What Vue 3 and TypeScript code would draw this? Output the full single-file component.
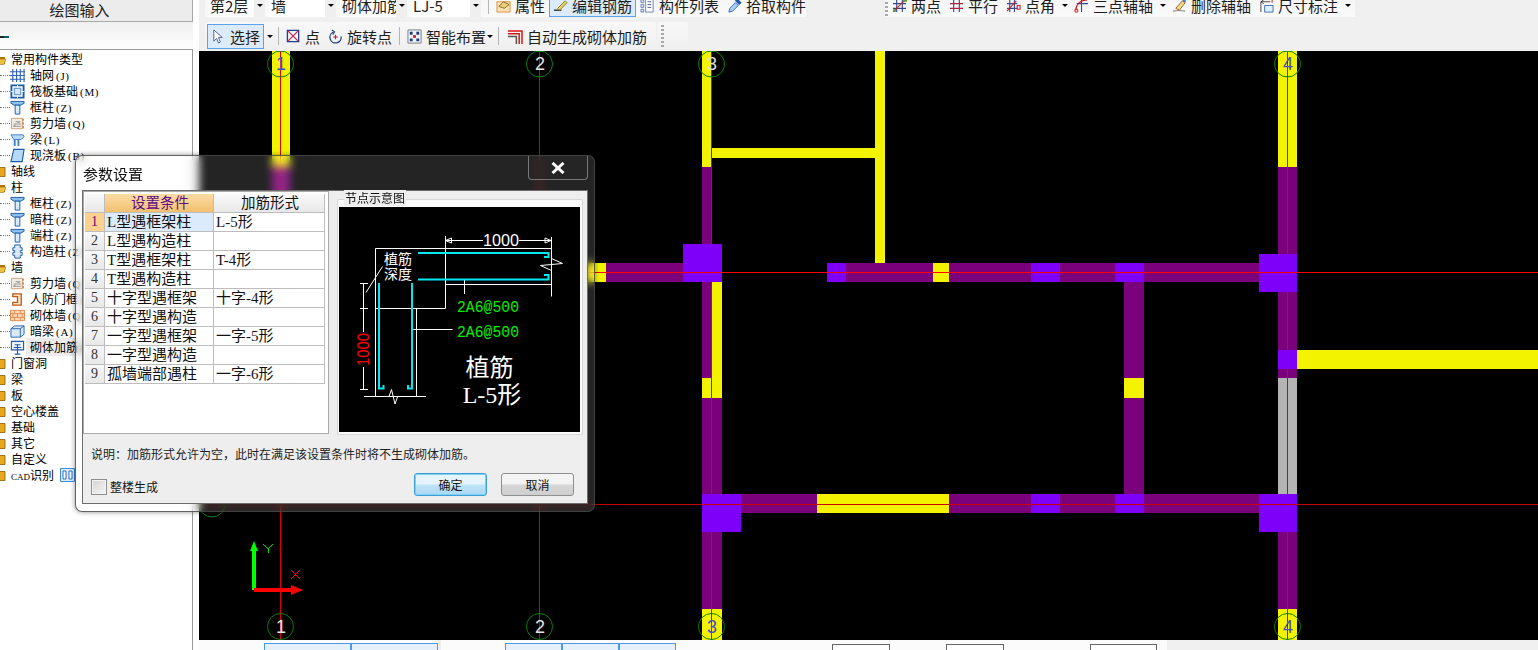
<script setup lang="ts">
interface Shape {
  d: string
  s?: string
  f?: string
  w?: number
}

interface Tool {
  icon?: string
  label: string
  active?: boolean
  arrow?: boolean
  tight?: boolean
  sep?: boolean
  iconWidth?: number
}

interface TreeRow {
  label: string
  key?: string
  icon?: string
  open?: boolean
  prefix?: string
}

const icons: Record<string, Shape[]> = {
  grid: [
    { d: 'M3 1v14M7 1v14M11 1v14M15 1v14M0 4h16M0 8h16M0 12h16', s: '#2f62b8', w: 1.2 },
  ],
  raft: [
    { d: 'M1.5 1.5h13v13h-13z', s: '#1d5aa8', f: '#fff', w: 2 },
    { d: 'M4.5 4.5h7v7h-7z', s: '#3f7fc8', f: '#d8e8f8', w: 1 },
    { d: 'M1 8h3M12 8h3M8 1v3M8 12v3', s: '#fff', w: 1 },
  ],
  col: [
    { d: 'M1 1.5h14v2l-3.5 2v0h-7l-3.5-2z', s: '#1a5aa8', f: '#8fc0ee', w: 1 },
    { d: 'M5.5 5.5h5v9.5h-5z', s: '#1a5aa8', f: '#d8eafb', w: 1 },
  ],
  wall: [
    { d: 'M1.5 2.5h12v11h-12z', s: '#c9a27a', f: '#f0ece6', w: 1 },
    { d: 'M3 11h9M4 8.5h8M6 6h5M4 10h2M8 7h2', s: '#999', w: 1 },
    { d: 'M14 3v2M14 7v2M14 11v2', s: '#e0701a', w: 1.5 },
  ],
  beam: [
    { d: 'M1 3h13l1 2-3 3H4z', s: '#3f7fc8', f: '#b8daf6', w: 1 },
    { d: 'M5 8v7M9 8v7', s: '#3f7fc8', w: 2 },
  ],
  slab: [
    { d: 'M4 1.5h11l-2 13H1z', s: '#1d5aa8', f: '#b8d8f6', w: 1.2 },
  ],
  connect: [
    { d: 'M5 1h6v3h2v3h-2v2h2v3h-2v3H5v-3H3V9h2V7H3V4h2z', s: '#1d5aa8', f: '#dbe8f8', w: 1 },
  ],
  door: [
    { d: 'M3 2h9v12H3v-3h5V5H3z', s: '#c05a16', f: '#fbe2c8', w: 1.4 },
  ],
  brick: [
    { d: 'M.5 2.5h15v11H.5z', s: '#e08a4a', f: '#fbd9b8', w: 1 },
    { d: 'M.5 6h15M.5 10h15M5 2.5V6M11 2.5V6M3 6v4M8 6v4M13 6v4M5 10v3.5M11 10v3.5', s: '#e08a4a', w: 1 },
  ],
  lintel: [
    { d: 'M1 5l4-3h10v9l-4 3H1z', s: '#2a64ad', f: '#d9e8f7', w: 1 },
    { d: 'M1 5h10v9M11 5l4-3', s: '#2a64ad', w: 1 },
  ],
  rebar: [
    { d: 'M1.5 1.5h13v9h-13z', s: '#2458a8', f: '#eaf3fc', w: 1.2 },
    { d: 'M5 5h6M8 5v10M5 15h6M4 8l8 0', s: '#2458a8', w: 1.2 },
  ],
  cad: [
    { d: 'M.5 .5h14v13h-14z', s: '#3d8ae0', f: '#dcecfc', w: 1 },
    { d: 'M3 3h3v8H3zM9 3h3v8H9z', s: '#2a6fc8', f: '#fff', w: 1 },
  ],
  attr: [
    { d: 'M1 4h14v11H1z', s: '#e0903a', f: '#fde2b8', w: 1 },
    { d: 'M3 9l5-5 6 3-5 4z', s: '#8a6a20', f: '#e8d078', w: 1 },
  ],
  edit: [
    { d: 'M1 13h8', s: '#333', w: 1.5 },
    { d: 'M5 11L13 3l2 2-8 8z', s: '#8a7a20', f: '#e8d46a', w: 1 },
  ],
  list: [
    { d: 'M1 2h3v3H1zM1 7h3v3H1zM1 12h3v3H1z', s: '#6a88b8', f: '#dbe6f4', w: 1 },
    { d: 'M6 1h8v14H6z', s: '#6a88b8', f: '#fff', w: 1 },
    { d: 'M8 4h4M8 7h4M8 10h4', s: '#44628e', w: 1 },
  ],
  picker: [
    { d: 'M2 15l1-4 6-6 3 3-6 6z', s: '#2a6ab8', f: '#a8d0f4', w: 1 },
    { d: 'M9 3l2-2 4 4-2 2z', s: '#1a4a90', f: '#1a5ab0', w: 1 },
  ],
  twoPt: [
    { d: 'M5 2v13M11 2v13M1 6h14M1 11h14', s: '#35478f', w: 1.2 },
    { d: 'M2 14L14 2', s: '#d02020', w: 1.2 },
    { d: 'M12 0h4v4h-4zM1 12h3v3H1z', f: '#5a9a30' },
  ],
  parallel: [
    { d: 'M5 2v13M11 2v13', s: '#35478f', w: 1.2 },
    { d: 'M1 6h14M1 11h14', s: '#b02040', w: 1.2 },
  ],
  angle: [
    { d: 'M4 2v13M9 2v13M1 6h11M1 11h11', s: '#35478f', w: 1.2 },
    { d: 'M1 14L11 3', s: '#d02020', w: 1.2 },
    { d: 'M12 8h3v4h-3z', s: '#d02020', w: 1.2 },
  ],
  arc: [
    { d: 'M8 2v13M3 6h12', s: '#35478f', w: 1.2 },
    { d: 'M2 13C2 7 7 2 14 2', s: '#d02020', w: 1.2 },
    { d: 'M1 12h3v3H1z', s: '#d02020', w: 1 },
  ],
  erase: [
    { d: 'M1 14c4-1 8-1 13 0', s: '#8a8a8a', w: 1.2 },
    { d: 'M4 11l7-8 3 2-6 8z', s: '#8a6a20', f: '#f4d890', w: 1 },
    { d: 'M11 3l2-2 2 2-1 2z', f: '#4a80c8' },
  ],
  size: [
    { d: 'M2 15V4h10M2 4l3-2M2 4l3 2', s: '#444', w: 1 },
    { d: 'M6 15V8h9v7z', s: '#3a70b0', f: '#e4eff9', w: 1 },
    { d: 'M14 1v4', s: '#c02020', w: 1 },
  ],
  cursor: [
    { d: 'M3 1l0 12 3-3 2 5 2-1-2-5h4z', s: '#55608a', f: '#fff', w: 1 },
  ],
  point: [
    { d: 'M1.5 1.5h12v12h-12z', s: '#2a3a8a', f: '#f2f2fa', w: 1.4 },
    { d: 'M2 2l11 11M13 2L2 13', s: '#c02040', w: 1.2 },
  ],
  rotate: [
    { d: 'M6 3.2A6 6 0 1 0 14 8', s: '#27417e', f: 'none', w: 1.4 },
    { d: 'M4 1l3 2-2 3', s: '#27417e', f: 'none', w: 1.2 },
    { d: 'M8 6v5M5.5 8.5h5', s: '#c02040', w: 1.2 },
  ],
  smart: [
    { d: 'M1 1h14v14H1z', s: '#777', f: '#eef3fa', w: 1 },
    { d: 'M3 3h3v3H3zM10 3h3v3h-3zM3 10h3v3H3zM10 10h3v3h-3z', f: '#233b78' },
    { d: 'M6.5 6.5h3v3h-3z', f: '#c02040' },
  ],
  auto: [
    { d: 'M1 2h15v14', s: '#e01010', f: 'none', w: 1.6 },
    { d: 'M1 5h12v11', s: '#c82020', f: 'none', w: 1.6 },
    { d: 'M1 8h9v8', s: '#555', f: 'none', w: 1.6 },
  ],
}

const combos = [
  { label: '第2层', width: 57 },
  { label: '墙', width: 67 },
  { label: '砌体加筋', width: 67 },
  { label: 'LJ-5', width: 70 },
]

const editTools: Tool[] = [
  { icon: 'attr', label: '属性' },
  { icon: 'edit', label: '编辑钢筋', active: true },
  { icon: 'list', label: '构件列表' },
  { icon: 'picker', label: '拾取构件' },
]

const axisTools: Tool[] = [
  { icon: 'twoPt', label: '两点' },
  { icon: 'parallel', label: '平行' },
  { icon: 'angle', label: '点角', arrow: true },
  { icon: 'arc', label: '三点辅轴', arrow: true },
  { icon: 'erase', label: '删除辅轴' },
  { icon: 'size', label: '尺寸标注', arrow: true },
]

const drawTools: Tool[] = [
  { icon: 'cursor', label: '选择', active: true, arrow: true, sep: true },
  { icon: 'point', label: '点' },
  { icon: 'rotate', label: '旋转点', sep: true },
  { icon: 'smart', label: '智能布置', arrow: true, tight: true, sep: true },
  { icon: 'auto', label: '自动生成砌体加筋', iconWidth: 17 },
]

const tree: TreeRow[] = [
  { label: '常用构件类型', open: true },
  { label: '轴网', key: '(J)', icon: 'grid' },
  { label: '筏板基础', key: '(M)', icon: 'raft' },
  { label: '框柱', key: '(Z)', icon: 'col' },
  { label: '剪力墙', key: '(Q)', icon: 'wall' },
  { label: '梁', key: '(L)', icon: 'beam' },
  { label: '现浇板', key: '(B)', icon: 'slab' },
  { label: '轴线' },
  { label: '柱', open: true },
  { label: '框柱', key: '(Z)', icon: 'col' },
  { label: '暗柱', key: '(Z)', icon: 'col' },
  { label: '端柱', key: '(Z)', icon: 'col' },
  { label: '构造柱', key: '(Z)', icon: 'connect' },
  { label: '墙', open: true },
  { label: '剪力墙', key: '(Q)', icon: 'wall' },
  { label: '人防门框', key: '(F)', icon: 'door' },
  { label: '砌体墙', key: '(Q)', icon: 'brick' },
  { label: '暗梁', key: '(A)', icon: 'lintel' },
  { label: '砌体加筋', key: '(Y)', icon: 'rebar' },
  { label: '门窗洞' },
  { label: '梁' },
  { label: '板' },
  { label: '空心楼盖' },
  { label: '基础' },
  { label: '其它' },
  { label: '自定义' },
  { label: '识别', prefix: 'CAD' },
]

const settings = [
  ['L型遇框架柱', 'L-5形'],
  ['L型遇构造柱', ''],
  ['T型遇框架柱', 'T-4形'],
  ['T型遇构造柱', ''],
  ['十字型遇框架', '十字-4形'],
  ['十字型遇构造', ''],
  ['一字型遇框架', '一字-5形'],
  ['一字型遇构造', ''],
  ['孤墙端部遇柱', '一字-6形'],
]

const YELLOW = '#f3f300'
const PURPLE = '#7b007b'
const VIOLET = '#7f00f8'
const GRAY = '#b4b4b4'

// x, y, w, h in page coordinates, the svg viewBox matches the page
const walls: [number, number, number, number, string][] = [
  [272, 51, 18, 116, YELLOW],
  [272, 167, 18, 233, PURPLE],
  [702, 51, 9, 116, YELLOW],
  [702, 167, 9, 77, PURPLE],
  [711, 148, 164, 10, YELLOW],
  [875, 51, 10, 212, YELLOW],
  [585, 263, 21, 19, YELLOW],
  [606, 263, 77, 19, PURPLE],
  [683, 244, 39, 38, VIOLET],
  [702, 282, 10, 96, PURPLE],
  [712, 282, 10, 96, YELLOW],
  [702, 378, 20, 20, YELLOW],
  [702, 398, 20, 96, PURPLE],
  [702, 494, 39, 38, VIOLET],
  [702, 532, 20, 77, PURPLE],
  [702, 609, 20, 31, YELLOW],
  [827, 263, 19, 19, VIOLET],
  [846, 263, 87, 19, PURPLE],
  [933, 263, 16, 19, YELLOW],
  [949, 263, 82, 19, PURPLE],
  [1031, 263, 29, 19, VIOLET],
  [1060, 263, 55, 19, PURPLE],
  [1115, 263, 29, 19, VIOLET],
  [1144, 263, 115, 19, PURPLE],
  [1124, 282, 20, 96, PURPLE],
  [1124, 378, 20, 20, YELLOW],
  [1124, 398, 20, 96, PURPLE],
  [741, 494, 76, 19, PURPLE],
  [817, 494, 132, 19, YELLOW],
  [949, 494, 82, 19, PURPLE],
  [1031, 494, 29, 19, VIOLET],
  [1060, 494, 55, 19, PURPLE],
  [1115, 494, 29, 19, VIOLET],
  [1144, 494, 115, 19, PURPLE],
  [1278, 51, 19, 116, YELLOW],
  [1278, 167, 19, 87, PURPLE],
  [1259, 254, 38, 38, VIOLET],
  [1278, 292, 19, 58, PURPLE],
  [1278, 350, 19, 19, VIOLET],
  [1297, 350, 241, 19, YELLOW],
  [1278, 369, 19, 9, PURPLE],
  [1278, 378, 19, 116, GRAY],
  [1259, 494, 38, 38, VIOLET],
  [1278, 532, 19, 77, PURPLE],
  [1278, 609, 19, 31, YELLOW],
]

const axes = [
  { x: 280, label: '1', top: '#4a4ad0', bottom: '#e6e6e6' },
  { x: 539, label: '2', top: '#e6e6e6', bottom: '#e6e6e6' },
  { x: 711, label: '3', top: '#dcdcdc', bottom: '#4a4ad0' },
  { x: 1287, label: '4', top: '#4a4ad0', bottom: '#4a4ad0' },
]
</script>

<template>
  <div class="app">
    <aside class="side">
      <div class="side-title">绘图输入</div>
      <div class="side-bar"><span class="mini-icon"></span></div>
      <div class="tree">
        <div v-for="(row, i) in tree" :key="i" class="tree-row" :class="{ child: row.icon }">
          <template v-if="row.icon">
            <span class="dots"></span>
            <svg class="tree-icon" viewBox="0 0 16 16">
              <path v-for="(p, j) in icons[row.icon]" :key="j" :d="p.d" :stroke="p.s || 'none'" :fill="p.f || 'none'" :stroke-width="p.w || 1" />
            </svg>
            <span class="tree-label" :class="{ current: row.label === '砌体加筋' }">{{ row.label }}<small>{{ row.key }}</small></span>
          </template>
          <template v-else>
            <svg class="folder" viewBox="0 0 11 11">
              <path v-if="row.open" d="M0 2h4l1 1h5v7H0z" fill="#b07a10" />
              <path v-if="row.open" d="M3 5h8l-2 5.500H0z" fill="#f0c040" stroke="#8a5c08" stroke-width=".5" />
              <path v-else d="M0 1.500h10v9H0z" fill="#e8a820" stroke="#8a5c08" stroke-width=".8" />
            </svg>
            <span class="tree-label"><small v-if="row.prefix" class="latin">{{ row.prefix }}</small>{{ row.label }}</span>
            <svg v-if="row.prefix" class="cad-icon" viewBox="0 0 15 14">
              <path v-for="(p, j) in icons.cad" :key="j" :d="p.d" :stroke="p.s || 'none'" :fill="p.f || 'none'" :stroke-width="p.w || 1" />
            </svg>
          </template>
        </div>
      </div>
    </aside>

    <main class="main">
      <div class="top-row">
        <div class="band band-left">
          <div v-for="c in combos" :key="c.label" class="combo" :style="{ width: c.width + 'px' }">
            <span class="combo-text">{{ c.label }}</span>
            <span class="combo-arrow"></span>
          </div>
          <span class="sep"></span>
          <div v-for="t in editTools" :key="t.label" class="tool" :class="{ active: t.active }">
            <svg class="icon" viewBox="0 0 16 16">
              <path v-for="(p, j) in icons[t.icon!]" :key="j" :d="p.d" :stroke="p.s || 'none'" :fill="p.f || 'none'" :stroke-width="p.w || 1" />
            </svg>
            {{ t.label }}
          </div>
        </div>
        <div class="band band-right">
          <span class="grip"></span>
          <template v-for="t in axisTools" :key="t.label">
            <div class="tool">
              <svg class="icon" viewBox="0 0 16 16">
                <path v-for="(p, j) in icons[t.icon!]" :key="j" :d="p.d" :stroke="p.s || 'none'" :fill="p.f || 'none'" :stroke-width="p.w || 1" />
              </svg>
              {{ t.label }}
            </div>
            <span v-if="t.arrow" class="drop"></span>
          </template>
        </div>
      </div>

      <div class="second-row">
        <div class="band2">
          <template v-for="t in drawTools" :key="t.label">
            <div class="tool" :class="{ active: t.active }">
              <svg class="icon" :style="t.iconWidth ? { width: t.iconWidth + 'px' } : undefined" viewBox="0 0 16 16">
                <path v-for="(p, j) in icons[t.icon!]" :key="j" :d="p.d" :stroke="p.s || 'none'" :fill="p.f || 'none'" :stroke-width="p.w || 1" />
              </svg>
              {{ t.label }}
            </div>
            <span v-if="t.arrow" class="drop" :class="{ tight: t.tight }"></span>
            <span v-if="t.sep" class="sep"></span>
          </template>
        </div>
        <div class="band2 stub"><span class="grip"></span></div>
      </div>

      <svg class="canvas" viewBox="199 51 1339 589" width="1339" height="589">
        <rect x="199" y="51" width="1339" height="589" fill="#000" />
        <rect v-for="(w, i) in walls" :key="i" :x="w[0]" :y="w[1]" :width="w[2]" :height="w[3]" :fill="w[4]" />
        <rect x="199" y="272" width="1339" height="1" fill="#ff0000" />
        <rect x="199" y="504" width="1339" height="1" fill="#c80000" />
        <circle cx="212" cy="504" r="13" fill="none" stroke="#0a800a" />
        <g v-for="a in axes" :key="a.x">
          <rect :x="a.x" y="51" width="1" height="589" fill="#e00000" />
          <circle :cx="a.x + 0.5" cy="64" r="13" fill="none" stroke="#0a800a" />
          <circle :cx="a.x + 0.5" cy="626.500" r="13" fill="none" stroke="#0a800a" />
          <text :x="a.x + 1" y="70" class="axis-num" :fill="a.top">{{ a.label }}</text>
          <text :x="a.x + 1" y="633" class="axis-num" :fill="a.bottom">{{ a.label }}</text>
        </g>
        <path d="M252 590v-39h-2l4-10 4 10h-2v39z" fill="#00ff00" />
        <path d="M263 544l5 5 5-5M268 549v4" stroke="#00e000" fill="none" shape-rendering="crispEdges" />
        <path d="M254 588h37v-3l12 5-12 5v-3h-37z" fill="#ff0000" />
        <path d="M291 570l9 9M300 570l-9 9" stroke="#ff0000" fill="none" shape-rendering="crispEdges" />
      </svg>

      <div class="bottom-bar">
        <div class="bottom-group">
          <span class="bottom-lead"></span>
          <span class="bottom-btn" style="width:87px"></span>
          <span class="bottom-btn" style="width:87px"></span>
        </div>
        <div class="bottom-group grow">
          <span class="bottom-lead wide"></span>
          <span class="bottom-btn" style="width:57px"></span>
          <span class="bottom-btn" style="width:57px"></span>
          <span class="bottom-btn" style="width:57px"></span>
          <span class="bottom-input first"></span>
          <span class="bottom-input second"></span>
          <span class="bottom-input third"></span>
        </div>
      </div>
    </main>

    <section class="dialog">
      <div class="dialog-title">参数设置</div>
      <button class="close" type="button">
        <svg viewBox="0 0 14 12" width="14" height="12">
          <path d="M1.500 1l11 10M12.500 1l-11 10" stroke="#fff" stroke-width="3" />
        </svg>
      </button>
      <div class="client">
        <div class="client-top">
          <div class="table-box">
            <div class="grid-table">
              <div class="cell index head"></div>
              <div class="cell head sorted">设置条件</div>
              <div class="cell head">加筋形式</div>
              <template v-for="(row, i) in settings" :key="i">
                <div class="cell index" :class="{ picked: i === 0 }">{{ i + 1 }}</div>
                <div class="cell" :class="{ current: i === 0 }">{{ row[0] }}</div>
                <div class="cell">{{ row[1] }}</div>
              </template>
            </div>
          </div>
          <div class="preview">
            <span class="preview-title">节点示意图</span>
            <svg class="preview-img" viewBox="339 206 241 225" width="241" height="225">
              <rect x="339" y="206" width="241" height="225" fill="#000" />
              <g stroke="#fff" fill="none">
                <path d="M375.500 247.500H551.500M375.500 247.500V395.500M416.500 307.500V395.500M375.500 307.500H445.500M445.500 235V307.500M445.500 283.500H551.500M551.500 236V295.500M464.500 278V293" />
                <path d="M445.500 239.500H483M519 239.500H551M445.500 239.500l6 -2.500v5zM551 239.500l-6 -2.500v5z" />
                <path d="M551.500 257.500L562.500 262.500L540.500 264.500L551.500 269.500" />
                <path d="M382.500 265.500L366 291.500" />
                <path d="M363.500 282.500V331M363.500 366V388.500M360 282.500H368M360 307.500H368M360 388.500H368" />
                <path d="M364 395.500H426M389 395.500L391.500 388.500L395 403L397.500 396" />
                <path d="M412.500 328.500H452.500" />
              </g>
              <g stroke="#00e8f0" stroke-width="2" fill="none">
                <path d="M418 252H548.500V256H544" />
                <path d="M418 278.500H548.500V274H544" />
                <path d="M379 282V387.500H383.500V384" />
                <path d="M412 282V387.500H408V384" />
              </g>
              <text x="501" y="245" class="dim" text-anchor="middle" fill="#fff" textLength="36" lengthAdjust="spacingAndGlyphs">1000</text>
              <text x="398" y="263" class="cap" text-anchor="middle">植筋</text>
              <text x="398" y="277.500" class="cap" text-anchor="middle">深度</text>
              <text x="457" y="311" class="rebar" textLength="62" lengthAdjust="spacingAndGlyphs">2A6@500</text>
              <text x="457" y="336" class="rebar" textLength="62" lengthAdjust="spacingAndGlyphs">2A6@500</text>
              <text x="0" y="0" class="dim" text-anchor="middle" fill="#ff0000" textLength="33" lengthAdjust="spacingAndGlyphs" transform="translate(369 348.500) rotate(-90)">1000</text>
              <text x="489.500" y="375" class="big" text-anchor="middle">植筋</text>
              <text x="492" y="402" class="big" text-anchor="middle">L-5形</text>
            </svg>
          </div>
        </div>
        <p class="note">说明：加筋形式允许为空，此时在满足该设置条件时将不生成砌体加筋。</p>
        <div class="client-foot">
          <label class="check"><span class="check-box"></span>整楼生成</label>
          <div class="actions">
            <button class="btn primary" type="button">确定</button>
            <button class="btn" type="button">取消</button>
          </div>
        </div>
      </div>
    </section>
  </div>
</template>

<style scoped>
.app {
  position: relative;
  display: flex;
  width: 1538px;
  height: 650px;
  overflow: hidden;
  background: #f0f0f0;
  font-family: "Liberation Serif", "Noto Sans CJK SC", serif;
  color: #000;
}

.side {
  width: 199px;
  flex: none;
  display: flex;
  flex-direction: column;
  background: #fff;
}

.side-title {
  height: 22px;
  width: 193px;
  box-sizing: border-box;
  flex: none;
  border-right: 1px solid #a8a8a8;
  border-bottom: 1px solid #a8a8a8;
  background: #ececec;
  font-size: 15px;
  line-height: 22px;
  padding-right: 33px;
  text-align: center;
  color: #222;
}

.side-bar {
  height: 27px;
  width: 193px;
  flex: none;
  display: flex;
  align-items: center;
  background: linear-gradient(#f0f0f0, #fdfdfd);
}

.mini-icon {
  width: 9px;
  height: 2px;
  margin-top: 3px;
  background: linear-gradient(90deg, #222 50%, #0b5f66 50%);
}

.tree {
  width: 193px;
  box-sizing: border-box;
  flex: 1;
  border-top: 1px solid #9a9a9a;
  border-right: 1px solid #9a9a9a;
  padding-top: 1px;
  overflow: hidden;
}

.tree-row {
  height: 16px;
  display: flex;
  align-items: center;
  font-size: 12px;
  white-space: nowrap;
}

.dots {
  width: 10px;
  flex: none;
  border-top: 1px dotted #777;
}

.tree-icon {
  width: 15px;
  height: 15px;
  flex: none;
}

.tree-label {
  margin-left: 5px;
}

.tree-label small {
  font-size: 11px;
  letter-spacing: 0.7px;
  margin-left: 2px;
}

.tree-label small.latin {
  font-size: 9px;
  letter-spacing: 0;
  margin-left: 0;
}

.tree-label.current {
  background: #ececec;
  margin-left: 1px;
  padding: 0 20px 0 4px;
}

.folder {
  width: 11px;
  height: 11px;
  flex: none;
  margin-left: -5px;
}

.cad-icon {
  width: 15px;
  height: 14px;
  margin-left: 6px;
}

.main {
  flex: 1;
  min-width: 0;
  display: flex;
  flex-direction: column;
}

.top-row {
  height: 17px;
  flex: none;
  display: flex;
  align-items: flex-end;
  overflow: hidden;
  padding-left: 6px;
}

.band {
  height: 24px;
  flex: none;
  display: flex;
  align-items: center;
  background: linear-gradient(#f4f4f4, #fafafa);
}

.band-left {
  width: 601px;
  padding-left: 3px;
  box-sizing: border-box;
}

.band-right {
  margin-left: 79px;
  padding-right: 2px;
}

.combo {
  height: 24px;
  display: flex;
  align-items: center;
  justify-content: space-between;
  box-sizing: border-box;
  margin-right: 4px;
  background: #fff;
  font-family: "Noto Sans CJK SC", sans-serif;
  font-size: 15px;
  color: #222;
  flex: none;
  overflow: hidden;
}

.combo-text {
  padding-left: 2px;
  white-space: nowrap;
  overflow: hidden;
  min-width: 0;
}

.combo-arrow {
  width: 11px;
  height: 24px;
  flex: none;
  background: #efefef;
  position: relative;
}

.combo-arrow::after {
  content: "";
  position: absolute;
  left: 3px;
  top: 11px;
  border: 3px solid transparent;
  border-top: 3px solid #000;
}

.sep {
  width: 1px;
  height: 18px;
  flex: none;
  background: #b4b4b4;
  margin: 0 3px;
}

.tool {
  height: 24px;
  box-sizing: border-box;
  display: flex;
  flex: none;
  align-items: center;
  gap: 4px;
  padding: 0 4px;
  font-family: "Noto Sans CJK SC", sans-serif;
  font-size: 15px;
  color: #1c1c1c;
  white-space: nowrap;
}

.tool.active {
  background: #dcebfa;
  outline: 1px solid #5aa3ea;
  outline-offset: -1px;
}

.icon {
  width: 15px;
  height: 15px;
  flex: none;
}

.drop {
  width: 11px;
  flex: none;
  position: relative;
  height: 10px;
}

.drop.tight {
  margin-left: -6px;
}

.drop::after {
  content: "";
  position: absolute;
  left: 3px;
  top: 4px;
  border: 3px solid transparent;
  border-top: 3px solid #000;
}

.grip {
  width: 3px;
  height: 22px;
  flex: none;
  background: repeating-linear-gradient(#a8a8a8 0 2px, transparent 2px 4px);
}

.second-row {
  height: 29px;
  margin-top: 5px;
  flex: none;
  display: flex;
  align-items: flex-start;
  gap: 2px;
  padding-left: 6px;
}

.band2 {
  height: 28px;
  display: flex;
  align-items: center;
  padding: 0 5px 0 2px;
  background: linear-gradient(#f8f8f8, #efefef);
  border-radius: 3px;
}

.band2 .tool {
  height: 25px;
}

.stub {
  width: 30px;
  padding-left: 3px;
  box-sizing: border-box;
}

.canvas {
  display: block;
  flex: none;
}

.axis-num {
  font-family: "Liberation Sans", sans-serif;
  font-size: 18px;
  text-anchor: middle;
}

.bottom-bar {
  flex: 1;
  display: flex;
  gap: 3px;
  overflow: hidden;
}

.bottom-group {
  display: flex;
  align-items: flex-start;
  height: 10px;
  background: #fbfbfb;
  position: relative;
}

.grow {
  width: 726px;
}

.bottom-lead {
  width: 65px;
}

.bottom-lead.wide {
  width: 64px;
}

.bottom-btn {
  height: 12px;
  margin-top: 3px;
  box-sizing: border-box;
  border: 1px solid #4b9aea;
  background: #e6f0fb;
  flex: none;
}

.bottom-input {
  width: 58px;
  height: 12px;
  margin-top: 4px;
  box-sizing: border-box;
  border: 1px solid #666;
  background: #fff;
  flex: none;
}

.bottom-input.first {
  margin-left: 156px;
}

.bottom-input.second {
  margin-left: 56px;
}

.bottom-input.third {
  margin-left: 86px;
  width: 67px;
}

.dialog {
  position: absolute;
  left: 75px;
  top: 155px;
  width: 520px;
  height: 357px;
  box-sizing: border-box;
  padding: 34px 6px 7px 6px;
  border: 1px solid rgba(70, 70, 70, 0.85);
  border-radius: 7px;
  background: rgba(255, 255, 255, 0.14);
  backdrop-filter: blur(4px);
  box-shadow: 0 0 5px rgba(0, 0, 0, 0.45);
  font-family: "Noto Sans CJK SC", sans-serif;
}

.dialog-title {
  position: absolute;
  left: 7px;
  top: 8px;
  font-size: 15px;
  line-height: 20px;
  color: #111;
  text-shadow: 0 0 4px #fff;
}

.close {
  position: absolute;
  right: 6px;
  top: 0;
  width: 60px;
  height: 24px;
  padding: 0;
  display: flex;
  align-items: center;
  justify-content: center;
  border: 1px solid #777;
  border-top: none;
  border-radius: 0 0 4px 4px;
  background: rgba(40, 40, 40, 0.35);
}

.client {
  height: 100%;
  box-sizing: border-box;
  border: 1px solid #6d6d6d;
  background: #eeeeee;
  display: flex;
  flex-direction: column;
  font-family: "Liberation Serif", "Noto Sans CJK SC", serif;
}

.client-top {
  display: flex;
  gap: 8px;
  flex: none;
}

.table-box {
  width: 246px;
  height: 243px;
  box-sizing: border-box;
  flex: none;
  border: 1px solid #a9a9a9;
  padding: 2px 0 0 1px;
  background: #fff;
}

.grid-table {
  display: grid;
  grid-template-columns: 20px 109px 111px;
  grid-auto-rows: 19px;
  font-size: 15px;
  line-height: 18px;
}

.cell {
  box-sizing: border-box;
  border-right: 1px solid #bdbdbd;
  border-bottom: 1px solid #bdbdbd;
  padding-left: 2px;
  white-space: nowrap;
  overflow: hidden;
  color: #111;
}

.cell.head {
  background: linear-gradient(#fafafa, #e8e8e8);
  text-align: center;
  font-size: 14.500px;
}

.cell.sorted {
  background: linear-gradient(#fbdca6, #f3c06f);
  color: #5c0a86;
}

.cell.index {
  background: linear-gradient(#f8f8f8, #e8e8e8);
  text-align: center;
  padding: 0;
  font-size: 14px;
  color: #333;
}

.cell.index.picked {
  background: #fdd08e;
  color: #5c0a86;
}

.cell.current {
  background: #dcebfb;
}

.preview {
  position: relative;
  width: 246px;
  height: 236px;
  margin-top: 8px;
  flex: none;
  box-sizing: border-box;
  padding: 7px 0 0 1px;
  background: #fbfbfb;
  border: 1px solid #d8d8d8;
  border-radius: 2px;
}

.preview-title {
  position: absolute;
  left: 6px;
  top: -10px;
  padding: 0 1px;
  background: #eee;
  font-family: "Noto Sans CJK SC", sans-serif;
  font-size: 12px;
  line-height: 16px;
  color: #111;
}

.preview-img {
  display: block;
}

.dim {
  font-family: "Liberation Sans", sans-serif;
  font-size: 16px;
}

.cap {
  font-family: "Noto Sans CJK SC", sans-serif;
  font-size: 14px;
  fill: #fff;
}

.rebar {
  font-family: "Liberation Mono", monospace;
  font-size: 16px;
  fill: #00f000;
}

.big {
  font-family: "Liberation Serif", "Noto Sans CJK SC", serif;
  font-size: 24px;
  fill: #fff;
}

.note {
  margin: 11px 0 0 8px;
  font-family: "Noto Sans CJK SC", sans-serif;
  font-size: 12px;
  line-height: 16px;
  color: #222;
}

.client-foot {
  margin-top: 11px;
  display: flex;
  align-items: flex-start;
  justify-content: space-between;
  padding: 0 13px 0 8px;
}

.check {
  display: flex;
  align-items: center;
  gap: 3px;
  margin-top: 5px;
  font-family: "Noto Sans CJK SC", sans-serif;
  font-size: 12px;
  color: #111;
}

.check-box {
  width: 16px;
  height: 16px;
  box-sizing: border-box;
  border: 1px solid #8e8e8e;
  background: linear-gradient(135deg, #d4d4d4, #f6f6f6);
  box-shadow: inset 0 0 0 1px #f4f4f4;
}

.actions {
  display: flex;
  gap: 14px;
}

.btn {
  width: 73px;
  height: 23px;
  padding: 0;
  border: 1px solid #8f8f8f;
  border-radius: 3px;
  background: linear-gradient(#f3f3f3 45%, #d5d5d5 55%, #cfcfcf);
  font-family: "Noto Sans CJK SC", sans-serif;
  font-size: 12px;
  color: #111;
}

.btn.primary {
  border: 1px solid #3b9fd6;
  background: linear-gradient(#e6f5fd 45%, #bfe3f7 55%, #a9d8f3);
  box-shadow: inset 0 0 0 1px #7fd0f5;
}
</style>

<style>
html,
body {
  margin: 0;
  background: #f0f0f0;
}
</style>
